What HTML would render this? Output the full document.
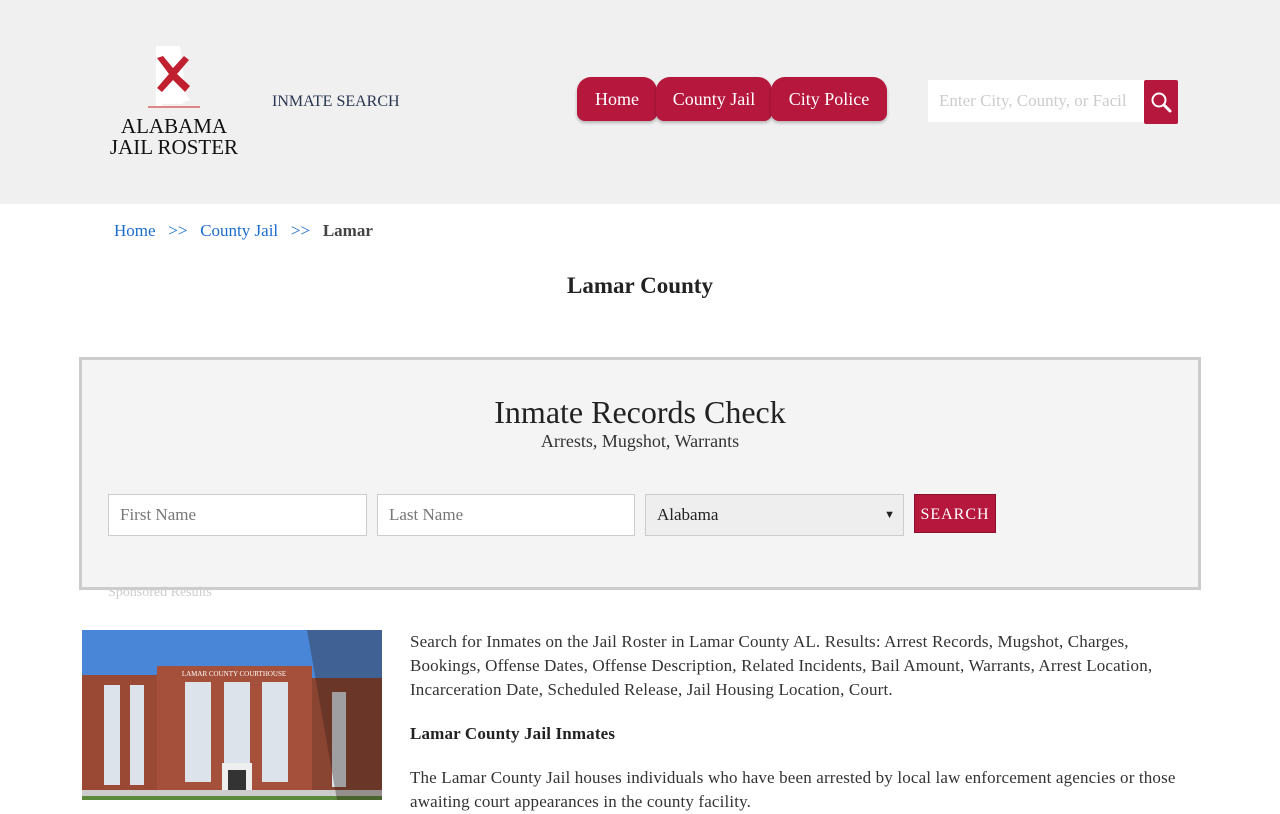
<!DOCTYPE html>
<html><head><meta charset="utf-8"><style>
*{box-sizing:border-box;margin:0;padding:0}
body{width:1280px;height:800px;overflow:hidden;background:#fff;font-family:"Liberation Serif",serif;color:#222}
.hdr{position:absolute;left:0;top:0;width:1280px;height:204px;background:#f0f0f0}
.abs{position:absolute}
.nav a{position:absolute;top:77px;height:44px;background:#b5173d;color:#fff;font-size:18px;line-height:44px;text-align:center;border-radius:14px 14px 8px 8px;text-decoration:none;box-shadow:0 2px 3px rgba(0,0,0,.25)}
.fld{position:absolute;top:494px;height:42px;border:1px solid #ccc;background:#fff;font-size:17px;color:#777;padding-left:11px;line-height:40px}
p{font-size:17px;line-height:24px;letter-spacing:.15px}
</style></head><body>
<div class="hdr">
  <svg class="abs" style="left:140px;top:44px" width="60" height="70" viewBox="0 0 60 70">
    <path d="M16 2 L40 2 L46 50 L50 56 L44 58 L42 60 L22 60 L22 64 L16 64 Z" fill="#fff"/>
    <path d="M17 14 L23 12 L33 24 L44 12 L49 16 L37 30 L50 42 L45 48 L33 36 L22 48 L17 44 L29 30 Z" fill="#c0202f"/>
  </svg>
  <div class="abs" style="left:148px;top:106px;width:52px;height:2px;background:#d88"></div>
  <div class="abs" style="left:105px;top:116px;width:138px;text-align:center;font-size:21px;line-height:21px;color:#111">ALABAMA<br>JAIL ROSTER</div>
  <div class="abs" style="left:272px;top:93px;font-size:16px;color:#2a3550">INMATE SEARCH</div>
  <div class="nav">
    <a style="left:577px;width:80px">Home</a>
    <a style="left:656px;width:116px">County Jail</a>
    <a style="left:771px;width:116px">City Police</a>
  </div>
  <div class="abs" style="left:928px;top:80px;width:217px;height:42px;background:#fff;font-size:17px;color:#ccc;line-height:42px;padding-left:11px;white-space:nowrap;overflow:hidden">Enter City, County, or Facil</div>
  <div class="abs" style="left:1144px;top:80px;width:34px;height:44px;background:#b5173d;border-radius:2px">
    <svg width="34" height="44" viewBox="0 0 34 44"><circle cx="15" cy="20" r="6.5" fill="none" stroke="#fff" stroke-width="2"/><path d="M20 25 L26 31" stroke="#fff" stroke-width="3" stroke-linecap="round"/></svg>
  </div>
</div>
<div class="abs" style="left:114px;top:221px;font-size:17px;color:#1a6dcc">Home &nbsp;&nbsp;&gt;&gt;&nbsp;&nbsp; County Jail &nbsp;&nbsp;&gt;&gt;&nbsp;&nbsp; <b style="color:#444">Lamar</b></div>
<div class="abs" style="left:0;top:273px;width:1280px;text-align:center;font-size:23px;font-weight:bold;color:#222">Lamar County</div>
<div class="abs" style="left:79px;top:357px;width:1122px;height:233px;background:#f4f4f4;border:3px solid #ccc"></div>
<div class="abs" style="left:0;top:394px;width:1280px;text-align:center;font-size:32px;color:#222">Inmate Records Check</div>
<div class="abs" style="left:0;top:431px;width:1280px;text-align:center;font-size:18px;color:#333">Arrests, Mugshot, Warrants</div>
<div class="fld" style="left:108px;width:259px">First Name</div>
<div class="fld" style="left:377px;width:258px">Last Name</div>
<div class="fld" style="left:645px;width:259px;background:#eee;color:#222">Alabama<span style="position:absolute;right:8px;font-size:11px">&#9660;</span></div>
<div class="abs" style="left:914px;top:494px;width:82px;height:39px;background:#b5173d;color:#fff;font-size:16px;line-height:39px;text-align:center;letter-spacing:1px;border:1px solid #8a1030">SEARCH</div>
<div class="abs" style="left:108px;top:585px;font-size:14px;color:#ccc">Sponsored Results</div>
<svg class="abs" style="left:82px;top:630px" width="300" height="170" viewBox="0 0 300 170">
  <rect width="300" height="170" fill="#4a86d8"/>
  <rect x="0" y="45" width="75" height="125" fill="#9a4a34"/>
  <rect x="75" y="36" width="155" height="134" fill="#a5503a"/>
  <rect x="230" y="48" width="70" height="122" fill="#8a4432"/>
  <text x="152" y="46" font-size="7" fill="#fff" text-anchor="middle" font-family="Liberation Serif">LAMAR COUNTY COURTHOUSE</text>
  <g fill="#dde3ea"><rect x="22" y="55" width="16" height="100"/><rect x="48" y="55" width="14" height="100"/><rect x="103" y="52" width="26" height="100"/><rect x="142" y="52" width="26" height="100"/><rect x="180" y="52" width="26" height="100"/><rect x="250" y="62" width="14" height="95"/></g>
  <rect x="140" y="133" width="30" height="37" fill="#eee"/><rect x="146" y="140" width="18" height="30" fill="#333"/>
  <rect x="0" y="160" width="300" height="10" fill="#ccc"/>
  <rect x="0" y="166" width="300" height="4" fill="#5a8a3a"/>
  <path d="M225 0 L300 0 L300 170 L255 170 Z" fill="#2a1e18" opacity=".35"/>
</svg>
<div class="abs" style="left:410px;top:630px;width:770px">
<p style="color:#333">Search for Inmates on the Jail Roster in Lamar County AL. Results: Arrest Records, Mugshot, Charges, Bookings, Offense Dates, Offense Description, Related Incidents, Bail Amount, Warrants, Arrest Location, Incarceration Date, Scheduled Release, Jail Housing Location, Court.</p>
<p style="margin-top:20px;font-weight:bold">Lamar County Jail Inmates</p>
<p style="margin-top:20px;color:#333">The Lamar County Jail houses individuals who have been arrested by local law enforcement agencies or those awaiting court appearances in the county facility.</p>
</div>
</body></html>
